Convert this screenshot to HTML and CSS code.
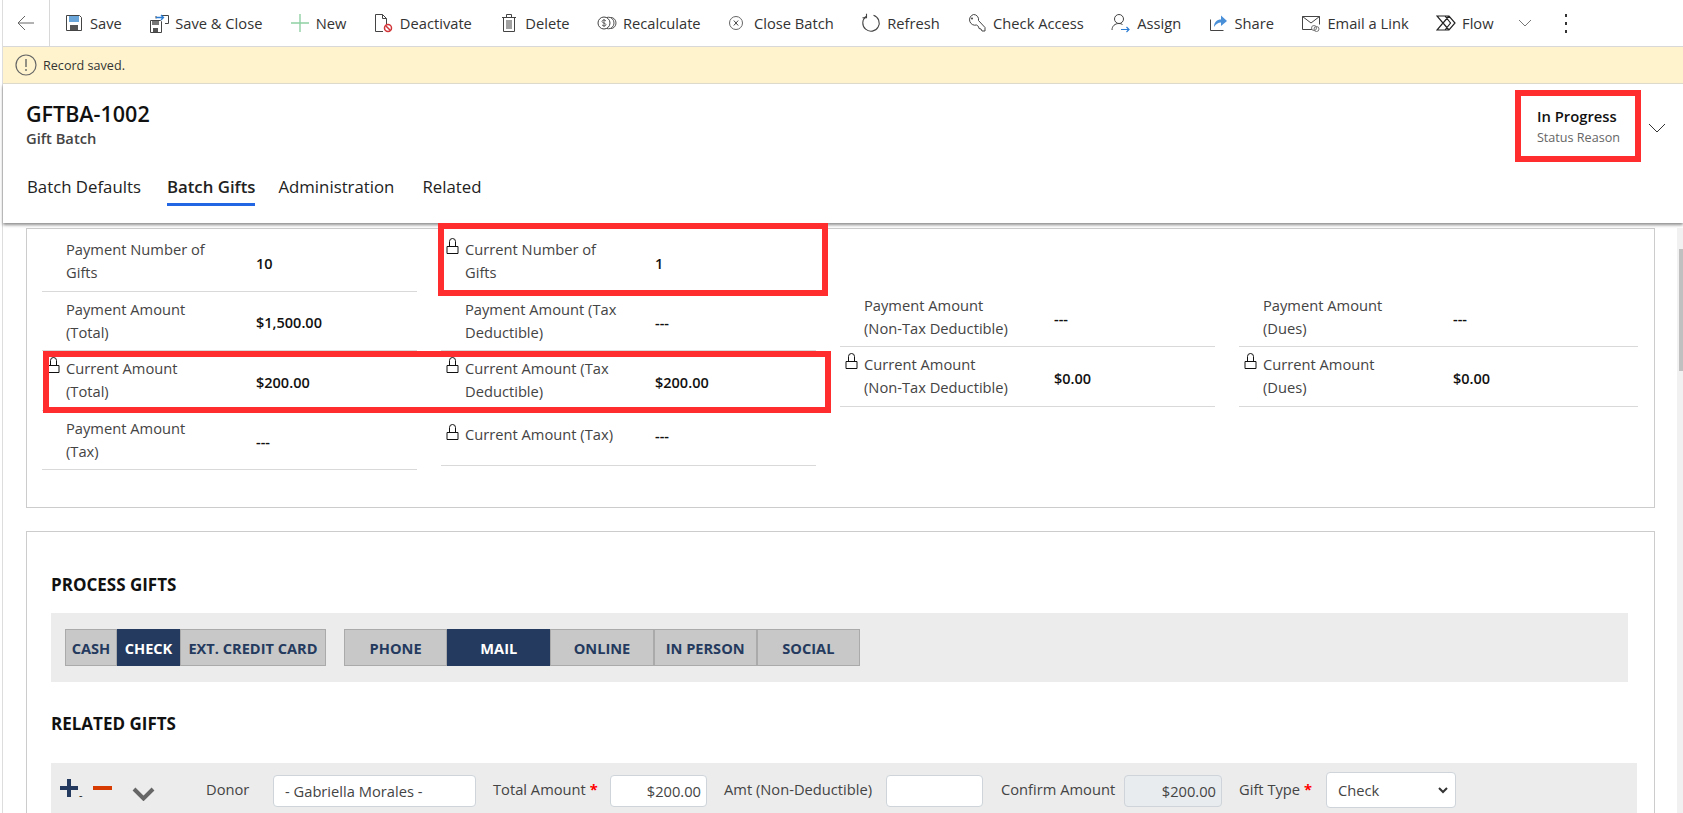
FILE: index.html
```html
<!DOCTYPE html>
<html>
<head>
<meta charset="UTF-8">
<title>GFTBA-1002 - Gift Batch</title>
<link rel="stylesheet" href="styles.css">
</head>
<body>
<div class="page">

  <!-- command bar -->
  <div class="toolbar">
    <div class="back">
      <svg width="18" height="16" viewBox="0 0 18 16"><path d="M8 1 1 8l7 7M1 8h16" fill="none" stroke="#666" stroke-width="1"/></svg>
    </div>
    <div class="cmd">
      <svg class="ico" viewBox="0 0 20 20"><path d="M2.500 2.500h13l2 2v13h-15z" fill="#fff" stroke="#444"/><rect x="5" y="3" width="10" height="6" fill="#69a5d8"/><rect x="6" y="12" width="8" height="5" fill="#555"/></svg>
      <span>Save</span>
    </div>
    <div class="cmd">
      <svg class="ico" viewBox="0 0 20 20"><path d="M1.500 7.500h10l1 1v11h-11z" fill="#fff" stroke="#444"/><rect x="3" y="8" width="7" height="4" fill="#777"/><rect x="4" y="15" width="5" height="4" fill="#555"/><path d="M13 2.500h6.500v8H16M7 5.500V3" fill="none" stroke="#444"/><path d="M7 4.500h7M12 2l2.500 2.500L12 7" fill="none" stroke="#2b7cd3" stroke-width="1.300"/></svg>
      <span>Save &amp; Close</span>
    </div>
    <div class="cmd">
      <svg class="ico" viewBox="0 0 20 20"><path d="M10 1v18M1 10h18" fill="none" stroke="#8fd1a3" stroke-width="1.400"/></svg>
      <span>New</span>
    </div>
    <div class="cmd">
      <svg class="ico" viewBox="0 0 20 20"><path d="M9 18.500H1.500v-17h7l4 4V11M8.500 1.500v4h4" fill="none" stroke="#444"/><circle cx="14" cy="15" r="3.500" fill="#fff" stroke="#d13438" stroke-width="1.500"/><path d="m11.500 12.500 5 5" stroke="#d13438" stroke-width="1.500"/></svg>
      <span>Deactivate</span>
    </div>
    <div class="cmd">
      <svg class="ico" viewBox="0 0 20 20"><path d="M3 4.500h14M7.500 4.500v-3h5v3M4.500 4.500v14h11v-14M8 7v9M10 7v9M12 7v9" fill="none" stroke="#444"/></svg>
      <span>Delete</span>
    </div>
    <div class="cmd">
      <svg class="ico" viewBox="0 0 20 20"><ellipse cx="14" cy="10" rx="5" ry="5.500" fill="#fff" stroke="#555"/><ellipse cx="11.500" cy="10" rx="5.500" ry="5.800" fill="#fff" stroke="#555"/><circle cx="7" cy="10" r="6" fill="#fff" stroke="#444"/><path d="M9 8c-1-1.500-4-1.200-4 .5S9 10 9 11.700 6 13 5 12M7 6v8" fill="none" stroke="#444" stroke-width=".8"/></svg>
      <span>Recalculate</span>
    </div>
    <div class="cmd">
      <svg class="ico" viewBox="0 0 20 20"><circle cx="8" cy="10" r="6.500" fill="none" stroke="#666"/><path d="m5.800 7.500 4.400 5M10.200 7.500l-4.400 5" stroke="#444"/></svg>
      <span>Close Batch</span>
    </div>
    <div class="cmd">
      <svg class="ico" viewBox="0 0 20 20"><path d="M12.500 2.200A8.200 8.200 0 1 1 5 3.500" fill="none" stroke="#444" stroke-width="1.100"/><path d="M5.500 .8v4H1.500" fill="none" stroke="#444" stroke-width="1.100"/></svg>
      <span>Refresh</span>
    </div>
    <div class="cmd">
      <svg class="ico" viewBox="0 0 20 20"><path d="M6.500 1.500a5 5 0 0 1 5 6l6.500 7v3.500h-3l-1-2-2-.5-.5-2-2-1.500a5 5 0 1 1-3-10.500z" fill="#fff" stroke="#444"/><circle cx="5" cy="5.500" r="1" fill="#444"/></svg>
      <span>Check Access</span>
    </div>
    <div class="cmd">
      <svg class="ico" viewBox="0 0 20 20"><circle cx="8" cy="6" r="4.500" fill="none" stroke="#444"/><path d="M1 17c0-4 3-6.500 7-6.500 1.500 0 2.500.3 3.500 1" fill="none" stroke="#444"/><path d="M10 16.500h8M15.500 14l2.500 2.500-2.500 2.500" fill="none" stroke="#2b7cd3" stroke-width="1.200"/></svg>
      <span>Assign</span>
    </div>
    <div class="cmd">
      <svg class="ico" viewBox="0 0 20 20"><path d="M1.500 6.500v11h13" fill="none" stroke="#444"/><path d="M5 14c0-5 3-7.500 7-7.500V2.500l6 5.500-6 5V9.500c-3 0-5 1.500-7 4.500z" fill="#4a90d9"/></svg>
      <span>Share</span>
    </div>
    <div class="cmd">
      <svg class="ico" viewBox="0 0 20 20"><path d="M11 16.500H1.500v-13h17v8M1.500 3.500 10 10l8.500-6.500" fill="none" stroke="#444"/><circle cx="13" cy="15" r="2.500" fill="none" stroke="#777"/><circle cx="15.500" cy="16" r="2.500" fill="none" stroke="#777"/></svg>
      <span>Email a Link</span>
    </div>
    <div class="cmd">
      <svg class="ico" viewBox="0 0 20 20"><path d="M1 3h12l6 7-6 7H1l6-7zM13 3 7 10l6 7M9 17l5.500-7L9 3" fill="none" stroke="#222" stroke-width="1.200"/></svg>
      <span>Flow</span>
    </div>
    <svg class="flow-more" width="14" height="8" viewBox="0 0 14 8"><path d="m1 1 6 6 6-6" fill="none" stroke="#777"/></svg>
    <div class="dots"><i></i><i></i><i></i></div>
  </div>

  <!-- notification -->
  <div class="notice">
    <svg width="22" height="22" viewBox="0 0 22 22"><circle cx="11" cy="11" r="10" fill="none" stroke="#666" stroke-width="1.200"/><path d="M11 5v8M11 15v2" stroke="#666" stroke-width="1.400"/></svg>
    <span>Record saved.</span>
  </div>

  <!-- record header -->
  <div class="header">
    <div class="title-row">
      <div>
        <h1>GFTBA-1002</h1>
        <div class="entity">Gift Batch</div>
      </div>
      <div class="status">
        <div class="status-text">
          <b>In Progress</b>
          <span>Status Reason</span>
        </div>
        <svg width="18" height="10" viewBox="0 0 18 10"><path d="m1 1 8 8 8-8" fill="none" stroke="#333"/></svg>
      </div>
    </div>
    <div class="tabs">
      <div class="tab">Batch Defaults</div>
      <div class="tab active">Batch Gifts</div>
      <div class="tab">Administration</div>
      <div class="tab">Related</div>
    </div>
  </div>

  <div class="content">
    <div class="card totals">
      <div class="col">
        <div class="field">
          <div class="lock-slot"></div>
          <div class="label">Payment Number of<br>Gifts</div>
          <div class="value">10</div>
        </div>
        <div class="field">
          <div class="lock-slot"></div>
          <div class="label">Payment Amount<br>(Total)</div>
          <div class="value">$1,500.00</div>
        </div>
        <div class="field">
          <div class="lock-slot"><svg class="lock" viewBox="0 0 13 16"><path d="M1 8.500h11v7H1zM3.500 8.500v-5a3 3 0 0 1 6 0v5" fill="none" stroke="#111"/></svg></div>
          <div class="label">Current Amount<br>(Total)</div>
          <div class="value">$200.00</div>
        </div>
        <div class="field">
          <div class="lock-slot"></div>
          <div class="label">Payment Amount<br>(Tax)</div>
          <div class="value">---</div>
        </div>
      </div>
      <div class="col">
        <div class="field">
          <div class="lock-slot"><svg class="lock" viewBox="0 0 13 16"><path d="M1 8.500h11v7H1zM3.500 8.500v-5a3 3 0 0 1 6 0v5" fill="none" stroke="#111"/></svg></div>
          <div class="label">Current Number of<br>Gifts</div>
          <div class="value">1</div>
        </div>
        <div class="field">
          <div class="lock-slot"></div>
          <div class="label">Payment Amount (Tax<br>Deductible)</div>
          <div class="value">---</div>
        </div>
        <div class="field">
          <div class="lock-slot"><svg class="lock" viewBox="0 0 13 16"><path d="M1 8.500h11v7H1zM3.500 8.500v-5a3 3 0 0 1 6 0v5" fill="none" stroke="#111"/></svg></div>
          <div class="label">Current Amount (Tax<br>Deductible)</div>
          <div class="value">$200.00</div>
        </div>
        <div class="field single">
          <div class="lock-slot"><svg class="lock" viewBox="0 0 13 16"><path d="M1 8.500h11v7H1zM3.500 8.500v-5a3 3 0 0 1 6 0v5" fill="none" stroke="#111"/></svg></div>
          <div class="label">Current Amount (Tax)</div>
          <div class="value">---</div>
        </div>
      </div>
      <div class="col low">
        <div class="field">
          <div class="lock-slot"></div>
          <div class="label">Payment Amount<br>(Non-Tax Deductible)</div>
          <div class="value">---</div>
        </div>
        <div class="field">
          <div class="lock-slot"><svg class="lock" viewBox="0 0 13 16"><path d="M1 8.500h11v7H1zM3.500 8.500v-5a3 3 0 0 1 6 0v5" fill="none" stroke="#111"/></svg></div>
          <div class="label">Current Amount<br>(Non-Tax Deductible)</div>
          <div class="value">$0.00</div>
        </div>
      </div>
      <div class="col low">
        <div class="field">
          <div class="lock-slot"></div>
          <div class="label">Payment Amount<br>(Dues)</div>
          <div class="value">---</div>
        </div>
        <div class="field">
          <div class="lock-slot"><svg class="lock" viewBox="0 0 13 16"><path d="M1 8.500h11v7H1zM3.500 8.500v-5a3 3 0 0 1 6 0v5" fill="none" stroke="#111"/></svg></div>
          <div class="label">Current Amount<br>(Dues)</div>
          <div class="value">$0.00</div>
        </div>
      </div>
    </div>

    <div class="card process">
      <h2>PROCESS GIFTS</h2>
      <div class="band buttons">
        <div class="btn-group">
          <div class="btn w-cash">CASH</div>
          <div class="btn w-check on">CHECK</div>
          <div class="btn w-ext">EXT. CREDIT CARD</div>
        </div>
        <div class="btn-group">
          <div class="btn w-src">PHONE</div>
          <div class="btn w-src on">MAIL</div>
          <div class="btn w-src">ONLINE</div>
          <div class="btn w-src">IN PERSON</div>
          <div class="btn w-src">SOCIAL</div>
        </div>
      </div>
      <h2 class="related">RELATED GIFTS</h2>
      <div class="band gift-row">
        <div class="row-tools">
          <svg width="18" height="18" viewBox="0 0 18 18"><path d="M9 0v18M0 9h18" stroke="#243a5e" stroke-width="4"/></svg>
          <span class="tiny">-</span>
          <span class="minus"></span>
          <svg class="row-chevron" width="23" height="14" viewBox="0 0 23 14"><path d="m2 2 9.500 9.500L21 2" fill="none" stroke="#666" stroke-width="4"/></svg>
        </div>
        <label class="l-donor">Donor</label>
        <div class="input w-donor">- Gabriella Morales -</div>
        <label class="l-total">Total Amount <em>*</em></label>
        <div class="input w-total num">$200.00</div>
        <label class="l-amt">Amt (Non-Deductible)</label>
        <div class="input w-amt"></div>
        <label class="l-confirm">Confirm Amount</label>
        <div class="input w-confirm num off">$200.00</div>
        <label class="l-type">Gift Type <em>*</em></label>
        <div class="input w-type">Check
          <svg width="10" height="7" viewBox="0 0 10 7"><path d="m1 1 4 4 4-4" fill="none" stroke="#333" stroke-width="2"/></svg>
        </div>
      </div>
    </div>
  </div>

</div>

<!-- red annotation boxes drawn on top of the screenshot -->
<div class="mark mark-status"></div>
<div class="mark mark-number"></div>
<div class="mark mark-amount"></div>

<!-- scrollbar -->
<div class="scroll"><div class="thumb"></div></div>
</body>
</html>
```

FILE: styles.css
```css
html, body {
  margin: 0;
  height: 100%;
  overflow: hidden;
  background: #fff;
}
body {
  font-family: "Open Sans", "Liberation Sans", sans-serif;
  font-size: 14.7px;
  color: #333;
}
.page {
  height: 813px;
  margin-left: 2px;
  border-left: 1px solid #ddd;
  display: flex;
  flex-direction: column;
}

/* command bar */
.toolbar {
  height: 46px;
  flex: none;
  display: flex;
  align-items: center;
  border-bottom: 1px solid #d8d8d8;
}
.back {
  width: 46px;
  height: 46px;
  flex: none;
  display: flex;
  align-items: center;
  justify-content: center;
  border-right: 1px solid #d8d8d8;
  margin-right: 14px;
}
.cmd {
  display: flex;
  align-items: center;
  margin-right: 27.400px;
  white-space: nowrap;
}
.ico {
  width: 20px;
  height: 20px;
  flex: none;
  margin-right: 6px;
}
.flow-more {
  flex: none;
  margin-left: -3px;
}
.dots {
  margin-left: 33px;
  display: flex;
  flex-direction: column;
  gap: 5px;
}
.dots i {
  display: block;
  width: 2px;
  height: 3px;
  background: #333;
}

/* notification */
.notice {
  height: 36px;
  flex: none;
  display: flex;
  align-items: center;
  gap: 6px;
  padding-left: 12px;
  background: #fef3cd;
  border-bottom: 1px solid #e4e0d0;
  font-size: 12.6px;
}

/* record header */
.header {
  height: 139px;
  flex: none;
  background: #fff;
  box-shadow: 0 2px 3px rgba(0, 0, 0, .45);
  position: relative;
}
.title-row {
  display: flex;
  justify-content: space-between;
  padding: 16px 17px 0 23px;
}
h1 {
  margin: 0;
  font-size: 21.5px;
  line-height: 28px;
  font-weight: 600;
  color: #111;
}
.entity {
  font-size: 14.7px;
  line-height: 20px;
  font-weight: 600;
  color: #444;
}
.status {
  height: 48px;
  display: flex;
  align-items: flex-start;
  gap: 28px;
}
.status-text {
  display: flex;
  flex-direction: column;
  padding-top: 6px;
}
.status-text b {
  font-size: 14.8px;
  line-height: 20px;
  font-weight: 600;
  color: #111;
}
.status-text span {
  font-size: 12.6px;
  line-height: 20px;
  margin-top: 1.500px;
  color: #666;
}
.status svg {
  margin-top: 23px;
}
.tabs {
  display: flex;
  gap: 26px;
  padding: 27px 0 0 24px;
}
.tab {
  font-size: 16.8px;
  line-height: 24px;
  padding-bottom: 4px;
  color: #222;
}
.tab.active {
  font-weight: 600;
  border-bottom: 3px solid #2266e3;
  margin-right: -3px;
}
.tab:nth-child(3) {
  margin-right: 2px;
}

/* form area */
.content {
  flex: 1;
  overflow: hidden;
  padding: 5px 28px 0 23px;
}
.card {
  border: 1px solid #ccc;
  background: #fff;
}
.totals {
  height: 275px;
  display: flex;
  padding: 3px 0 0 15px;
}
.col {
  width: 375px;
  margin-right: 24px;
  flex: none;
}
.col:last-child {
  width: 399px;
  margin-right: 0;
}
.col.low {
  padding-top: 55.500px;
}
.field {
  display: flex;
  align-items: center;
  padding: 6px 0 6.500px;
  border-bottom: 1px solid #d9d9d9;
}
.field.single {
  height: 55px;
  box-sizing: border-box;
  align-items: flex-start;
  padding-top: 12px;
}
.lock-slot {
  width: 24px;
  flex: none;
  align-self: flex-start;
  padding-left: 5px;
  box-sizing: border-box;
}
.field.single .lock-slot {
  margin-top: 1px;
}
.lock {
  display: block;
  width: 13px;
  height: 16px;
}
.label {
  width: 190px;
  flex: none;
  line-height: 23px;
  color: #444;
  white-space: nowrap;
}
.value {
  font-size: 14.5px;
  font-weight: 600;
  color: #111;
  padding-top: 4px;
}
.field.single .value {
  padding-top: 3px;
}

/* process gifts */
.process {
  margin-top: 23px;
  height: 400px;
  padding-left: 24px;
}
h2 {
  margin: 41px 0 0;
  font-size: 17px;
  line-height: 24px;
  font-weight: 700;
  color: #111;
}
h2.related {
  margin-top: 30px;
}
.band {
  background: #ececec;
}
.buttons {
  width: 1577px;
  height: 69px;
  margin-top: 16px;
  display: flex;
  align-items: center;
  gap: 18px;
  padding-left: 14px;
  box-sizing: border-box;
}
.btn-group {
  display: flex;
}
.btn {
  height: 37px;
  box-sizing: border-box;
  display: flex;
  align-items: center;
  justify-content: center;
  background: #c8c8c8;
  border: 1px solid #aaa;
  font-size: 14.6px;
  font-weight: 700;
  color: #243a5e;
  white-space: nowrap;
}
.btn.on {
  background: #243a5e;
  border-color: #243a5e;
  color: #fff;
}
.w-cash { width: 52px; }
.w-check { width: 63px; }
.w-ext { width: 146px; }
.w-src { width: 103.200px; }

/* related gift row */
.gift-row {
  width: 1586px;
  height: 70px;
  margin-top: 27px;
  display: flex;
  align-items: flex-start;
  padding: 12px 0 0 9px;
  box-sizing: border-box;
  color: #444;
}
.row-tools {
  width: 146px;
  flex: none;
  display: flex;
  align-items: flex-start;
  padding-top: 4px;
}
.tiny {
  font-size: 11px;
  line-height: 11px;
  margin: 10px 0 0 1px;
  color: #111;
}
.minus {
  width: 19px;
  height: 4px;
  margin: 7px 0 0 10px;
  background: #d83b01;
}
.row-chevron {
  margin: 8px 0 0 20px;
}
.gift-row label {
  flex: none;
  line-height: 29px;
  white-space: nowrap;
}
.gift-row em {
  font-style: normal;
  font-weight: 700;
  color: #f00;
}
.l-donor { width: 67px; }
.l-total { width: 117px; }
.l-amt { width: 162px; }
.l-confirm { width: 123px; }
.l-type { width: 87px; }
.input {
  flex: none;
  height: 32px;
  box-sizing: border-box;
  display: flex;
  align-items: center;
  padding: 0 11px;
  background: #fff;
  border: 1px solid #ced4da;
  border-radius: 4px;
  white-space: nowrap;
}
.input.num {
  justify-content: flex-end;
  padding-right: 5px;
}
.input.off {
  background: #e9ecef;
}
.w-donor { width: 203px; margin-right: 17px; }
.w-total { width: 97px; margin-right: 17px; }
.w-amt { width: 97px; margin-right: 18px; }
.w-confirm { width: 98px; margin-right: 17px; }
.w-type {
  width: 130px;
  height: 36px;
  margin-top: -3px;
  justify-content: space-between;
  padding-right: 7px;
}

/* red annotation boxes */
.mark {
  position: absolute;
  box-sizing: border-box;
  border: 6px solid #ff2d2d;
}
.mark-status { left: 1515px; top: 90px; width: 126px; height: 72px; }
.mark-number { left: 438px; top: 223px; width: 390px; height: 73px; }
.mark-amount { left: 43px; top: 351px; width: 788px; height: 62px; }

/* scrollbar */
.scroll {
  position: absolute;
  left: 1677px;
  top: 228px;
  bottom: 0;
  width: 6px;
  background: #f1f1f1;
}
.thumb {
  margin: 21px 0 0 2px;
  height: 122px;
  background: #c0c0c0;
}
```
